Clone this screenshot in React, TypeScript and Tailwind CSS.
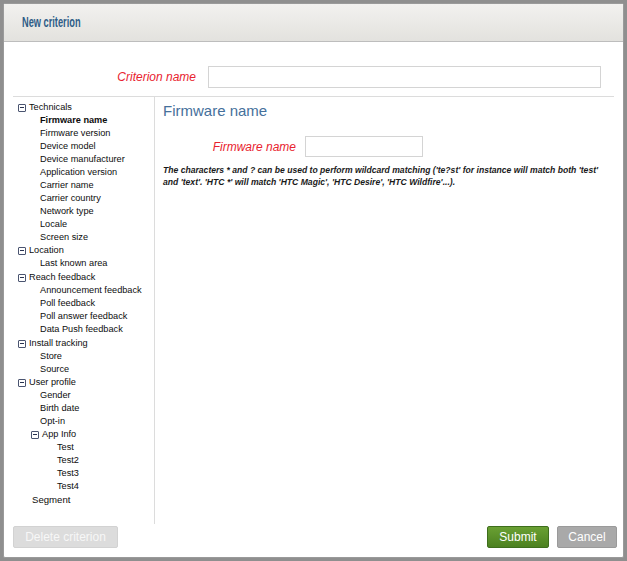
import React from "react";

type Node = { label: string; bold?: boolean; gap?: boolean; children?: Node[] };

const tree: Node[] = [
  {
    label: "Technicals",
    children: [
      { label: "Firmware name", bold: true },
      { label: "Firmware version" },
      { label: "Device model" },
      { label: "Device manufacturer" },
      { label: "Application version" },
      { label: "Carrier name" },
      { label: "Carrier country" },
      { label: "Network type" },
      { label: "Locale" },
      { label: "Screen size" },
    ],
  },
  { label: "Location", children: [{ label: "Last known area" }] },
  {
    label: "Reach feedback",
    gap: true,
    children: [
      { label: "Announcement feedback" },
      { label: "Poll feedback" },
      { label: "Poll answer feedback" },
      { label: "Data Push feedback" },
    ],
  },
  { label: "Install tracking", gap: true, children: [{ label: "Store" }, { label: "Source" }] },
  {
    label: "User profile",
    children: [
      { label: "Gender" },
      { label: "Birth date" },
      { label: "Opt-in" },
      {
        label: "App Info",
        children: [{ label: "Test" }, { label: "Test2" }, { label: "Test3" }, { label: "Test4" }],
      },
    ],
  },
];

const Toggle = () => (
  <span className="mr-[3px] flex h-[8px] w-[8px] shrink-0 items-center justify-center rounded-[1px] border border-[#4a5470] bg-white">
    <span className="h-px w-[4px] bg-[#2a3350]" />
  </span>
);

const TreeNode = ({ node, depth }: { node: Node; depth: number }) => {
  const indent = depth === 0 ? "pl-[5px]" : depth === 1 ? "pl-[27px]" : "pl-[44px]";
  if (node.children) {
    const headIndent = depth === 0 ? "pl-[5px]" : "pl-[18px]";
    return (
      <div className={node.gap ? "mt-px" : ""}>
        <div className={`flex h-[13px] items-center ${headIndent}`}>
          <Toggle />
          <span>{node.label}</span>
        </div>
        {node.children.map((c) => (
          <TreeNode key={c.label} node={c} depth={depth + 1} />
        ))}
      </div>
    );
  }
  return (
    <div className={`flex h-[13px] items-center ${indent} ${node.bold ? "font-bold" : ""}`}>
      {node.label}
    </div>
  );
};

const App = () => {
  return (
    <div className="h-[561px] w-[627px] overflow-hidden bg-[#8f8f8f] pl-[3px] pt-[3px] font-['Liberation_Sans',Arial,sans-serif]">
      <div className="flex h-[555px] w-[621px] flex-col rounded-[2px] border border-[#9a9a9a] bg-white">
        <div className="flex h-[38px] shrink-0 items-center border-b border-[#bdbdbd] bg-gradient-to-b from-[#f2f1ef] to-[#e3e2de] pl-[18px]">
          <h1 className="inline-block origin-left scale-x-[0.66] text-[14px] font-bold text-[#2f5d87]">
            New criterion
          </h1>
        </div>

        <div className="flex min-h-0 flex-1 flex-col px-[9px]">
          <div className="mt-[24px] flex items-center">
            <label className="w-[183px] text-right text-[12px] italic text-[#e8222e]">
              Criterion name
            </label>
            <input
              type="text"
              className="ml-[12px] h-[22px] w-[393px] border border-[#d4d4d4] bg-white outline-none"
            />
          </div>
          <div className="mt-[8px] border-t border-[#dcdcdc]" />

          <div className="flex min-h-0 flex-1">
            <div className="w-[142px] shrink-0 border-r border-[#dcdcdc] pt-[4px] text-[9.2px] text-[#0d0d0d]">
              {tree.map((n) => (
                <TreeNode key={n.label} node={n} depth={0} />
              ))}
              <div className="mt-px flex h-[13px] items-center pl-[19px] text-[9.6px]">Segment</div>
            </div>

            <div className="flex-1 pl-[8px] pt-[4px]">
              <h2 className="text-[15px] leading-[20px] text-[#45709b]">Firmware name</h2>
              <div className="mt-[15px] flex items-center">
                <label className="w-[133px] text-right text-[12px] italic text-[#e8222e]">
                  Firmware name
                </label>
                <input
                  type="text"
                  className="ml-[9px] h-[21px] w-[118px] border border-[#d4d4d4] bg-white outline-none"
                />
              </div>
              <p className="mt-[7px] whitespace-nowrap text-[8.6px] font-bold italic leading-[12px] text-[#1a1a1a]">
                The characters * and ? can be used to perform wildcard matching ('te?st' for instance will match both 'test'
                <br />
                and 'text'. 'HTC *' will match 'HTC Magic', 'HTC Desire', 'HTC Wildfire'...).
              </p>
            </div>
          </div>
        </div>

        <div className="flex shrink-0 items-center justify-between pb-[9px] pl-[9px] pr-[6px] pt-[2px]">
          <button className="h-[22px] w-[105px] rounded-[2px] border border-[#d2d2d2] bg-[#dcdcdc] text-[12px] text-[#f7f7f7]">
            Delete criterion
          </button>
          <div className="flex gap-[8px]">
            <button className="h-[22px] w-[62px] rounded-[2px] border border-[#3e6e1c] bg-gradient-to-b from-[#6aa033] to-[#4c8120] text-[12px] text-white">
              Submit
            </button>
            <button className="h-[22px] w-[60px] rounded-[2px] border border-[#9a9a9a] bg-[#a9a9a9] text-[12px] text-white">
              Cancel
            </button>
          </div>
        </div>
      </div>
    </div>
  );
};

export default App;
